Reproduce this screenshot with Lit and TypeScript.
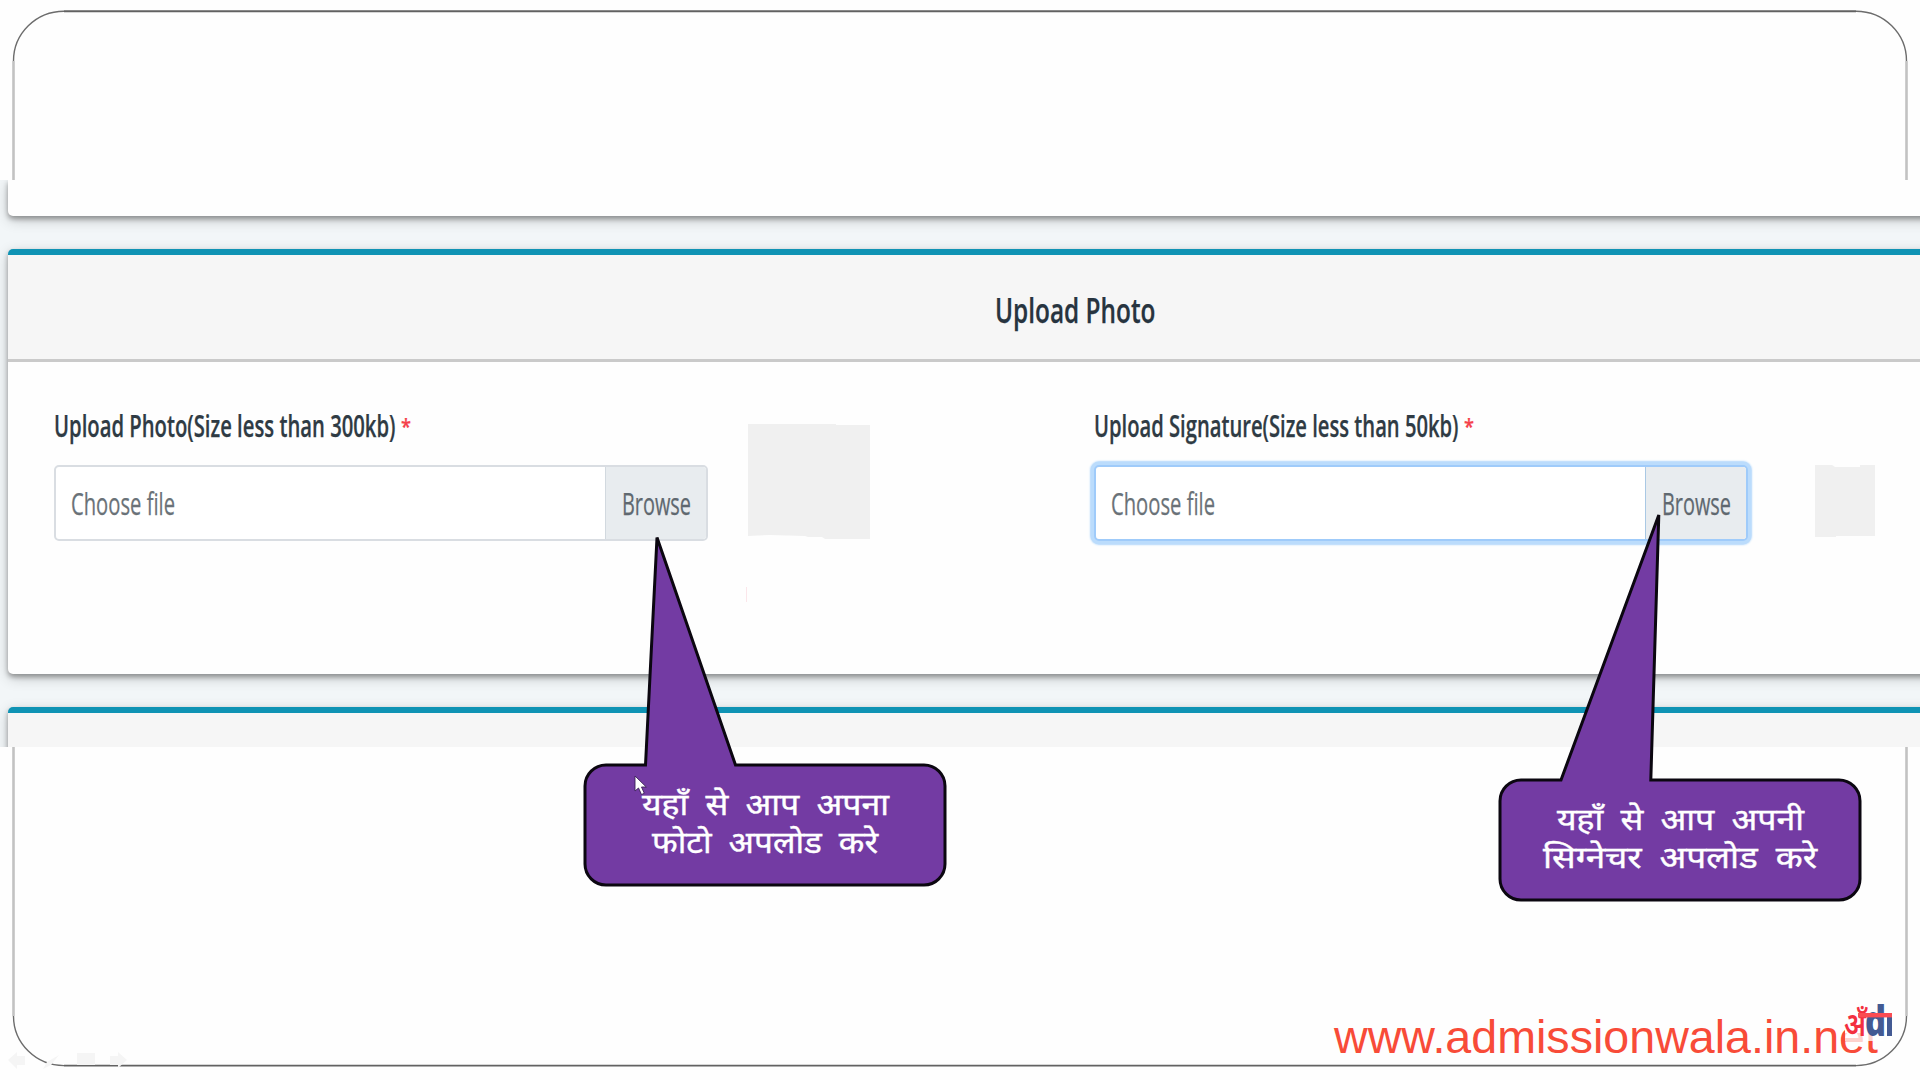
import { LitElement, html, css, svg } from "lit";
import { customElement, property } from "lit/decorators.js";

/** A line of text condensed or stretched to an exact width. */
@customElement("fit-text")
class FitText extends LitElement {
  @property() text = "";
  @property({ type: Number }) width = 100;
  @property({ type: Number }) size = 30;
  @property({ type: Number }) line = 40;
  @property({ type: Number }) base = 30;

  static styles = css`
    :host { display: block; flex: none; }
    svg { display: block; overflow: visible; }
    text { fill: currentColor; stroke: currentColor; stroke-width: var(--thicken, 0); white-space: pre; }
  `;

  render() {
    return html`<svg width=${this.width} height=${this.line}>
      <text x="0" y=${this.base} font-size=${this.size} textLength=${this.width}
        lengthAdjust="spacingAndGlyphs">${this.text}</text>
    </svg>`;
  }
}

@customElement("file-field")
class FileField extends LitElement {
  @property() label = "";
  @property({ type: Number }) labelWidth = 340;
  @property({ type: Boolean, reflect: true }) focused = false;

  static styles = css`
    :host { display: block; width: 654px; flex: none; --thicken: .25px; }
    .label { display: flex; gap: 5.5px; height: 59px; color: #2f3b44; font-weight: 600; }
    .star { color: #f5414b; font-weight: 600; }
    .input {
      display: flex; box-sizing: border-box; height: 76px;
      border: 2px solid #d9dde2; border-radius: 5px; background: #fff; color: #6a7278;
    }
    .name { flex: 1; padding: 16px 0 0 15px; }
    .browse {
      box-sizing: border-box; width: 101px; padding: 16px 0 0 16px;
      border-left: 1.5px solid #d2d9df; background: #e8ecef; color: #5f686f;
      border-radius: 0 3px 3px 0;
    }
    :host([focused]) .input { border-color: #9fcbfa; box-shadow: 0 0 0 3.5px #bbdcfc, 0 0 2px 4px #bbdcfc; }
    :host([focused]) .browse { border-left-color: #a9c8e4; }
  `;

  render() {
    return html`
      <div class="label">
        <fit-text .text=${this.label} .width=${this.labelWidth} .size=${30} .base=${30.5}></fit-text>
        <fit-text class="star" text="*" .width=${10} .size=${22} .base=${28}></fit-text>
      </div>
      <div class="input">
        <div class="name"><fit-text text="Choose file" .width=${104} .size=${30.5} .base=${31.5}></fit-text></div>
        <div class="browse"><fit-text text="Browse" .width=${69} .size=${30.5} .base=${31.5}></fit-text></div>
      </div>`;
  }
}

@customElement("call-out")
class CallOut extends LitElement {
  @property({ attribute: false }) lines: { text: string; width: number }[] = [];
  @property() outline = "";

  static styles = css`
    :host { display: block; position: absolute; width: 360px; height: 120px; }
    .shape { position: absolute; inset: 0; overflow: visible; }
    .lines {
      position: relative; display: flex; flex-direction: column; align-items: center;
      padding-top: 20px; color: #fff; word-spacing: 7.5px; --thicken: .4px;
    }
  `;

  render() {
    return html`
      <svg class="shape" width="360" height="120">
        <path d=${this.outline} fill="#733ba3" stroke="#0b0710" stroke-width="3" stroke-linejoin="miter" stroke-miterlimit="2"/>
      </svg>
      <div class="lines">
        ${this.lines.map(l => html`<fit-text .text=${l.text} .width=${l.width} .size=${30} .line=${38} .base=${29.5}></fit-text>`)}
      </div>`;
  }
}

const body = "H339 A21 21 0 0 1 360 21 V99 A21 21 0 0 1 339 120 H21 A21 21 0 0 1 0 99 V21 A21 21 0 0 1 21 0";

const frame = svg`
  <g fill="none">
    <path d="M13.5 61V1016M1906.5 61V1016" stroke="#c2c2c2" stroke-width="2.6"/>
    <path d="M64 11.3H1856M64 1065.6H1856" stroke="#626262" stroke-width="1.9"/>
    <path d="M13.5 61A50.5 49.7 0 0 1 64 11.3M1856 11.3A50.5 49.7 0 0 1 1906.5 61M1906.5 1016A50.5 49.6 0 0 1 1856 1065.6M64 1065.6A50.5 49.6 0 0 1 13.5 1016" stroke="#6c6c6c" stroke-width="1.4"/>
  </g>
  <g fill="#f5f5f5">
    <path d="M8 1060l9-8v4h8v9h-8v4z"/>
    <path d="M43 1069l4-7 12-7-8 10z"/>
    <path d="M77 1053h18v12h-18z"/>
    <path d="M127 1060l-9-8v4h-8v9h8v3z"/>
  </g>`;

@customElement("app-root")
class AppRoot extends LitElement {
  static styles = css`
    :host {
      display: block; width: 1920px; height: 1080px; overflow: hidden; background: #fefefe;
      font-family: "Open Sans", "Noto Sans", sans-serif;
    }
    .slide { position: relative; display: grid; grid-template-rows: 180px 567px 1fr; height: 1080px; overflow: hidden; }
    .frame { position: absolute; inset: 0; }
    .band {
      grid-row: 2; position: relative; display: flex; flex-direction: column; gap: 33px;
      padding-left: 7.5px; overflow: hidden; background: #f2f6f8;
    }
    .card {
      flex: none; width: 1950px; box-sizing: border-box; border-radius: 5px; background: #fefefe;
      box-shadow: 0 3px 5px rgba(0, 0, 0, .32), 0 4px 14px rgba(0, 0, 0, .2);
    }
    .previous { height: 36px; border-radius: 0 0 5px 5px; }
    .upload { height: 425px; border-top: 6.5px solid #0f93b4; }
    .next { height: 100px; border-top: 6.5px solid #0f93b4; background: #f6f6f6; }
    .head {
      box-sizing: border-box; height: 107px; padding: 31.5px 0 0 987px;
      border-bottom: 3.5px solid #cacaca; background: #f6f6f6; color: #27343f; font-weight: 600; --thicken: .25px;
    }
    .fields { display: flex; padding: 44px 0 0 46.5px; }
    .thumb { flex: none; overflow: visible; }
    .photo { margin: 18px 224px 0 40px; }
    .signature { margin: 59px 0 0 67px; }
    .foot { grid-row: 3; position: relative; display: flex; justify-content: flex-end; align-items: flex-end; padding: 0 42px 16px 0; }
    .url { font-family: "Liberation Sans", Arial, sans-serif; color: #f84b38; }
    .brand { position: absolute; left: 1840px; top: 1000px; overflow: visible; }
    .first { left: 585.3px; top: 765.3px; }
    .second { left: 1500.3px; top: 780.3px; }
    .cursor { position: absolute; left: 633.5px; top: 774.5px; }
  `;

  render() {
    return html`
      <div class="slide">
        <svg class="frame" width="1920" height="1080">${frame}</svg>
        <div class="band">
          <section class="card previous"></section>
          <section class="card upload">
            <div class="head">
              <fit-text text="Upload Photo" .width=${160.5} .size=${35} .base=${35.5}></fit-text>
            </div>
            <div class="fields">
              <file-field label="Upload Photo(Size less than 300kb)" .labelWidth=${341.5}></file-field>
              <svg class="thumb photo" width="122" height="115">
                <path d="M0 0H88V1H122V115H77L74 113H60L57 112L22 111L0 112Z" fill="#f0f0f0"/>
                <path d="M-1.5 163v15" stroke="#fbe6ea" stroke-width="1"/>
              </svg>
              <file-field focused label="Upload Signature(Size less than 50kb)" .labelWidth=${364.5}></file-field>
              <svg class="thumb signature" width="60" height="72">
                <path d="M0 0H17L20 2H45V0H60V71H21V72H0Z" fill="#f0f0f0"/>
              </svg>
            </div>
          </section>
          <section class="card next"></section>
        </div>
        <div class="foot">
          <fit-text class="url" text="www.admissionwala.in.net" .width=${544} .size=${46.5} .line=${48} .base=${37}></fit-text>
        </div>
        <svg class="brand" width="60" height="50">
          <rect x="5" y="33" width="38" height="8" fill="#fff" opacity=".75"/>
          <rect x="5" y="22" width="38" height="11" fill="#fff"/>
          <text x="25" y="36" font-size="42" font-weight="800" fill="#435a93" textLength="21" lengthAdjust="spacingAndGlyphs">d</text>
          <rect x="47" y="16" width="5" height="20" fill="#435a93"/>
          <text x="4" y="36" font-size="34" font-weight="600" fill="#f3303f" textLength="22" lengthAdjust="spacingAndGlyphs">अँ</text>
          <rect x="18" y="13" width="34" height="4.4" fill="#fa4c52"/>
        </svg>
        <call-out class="first"
          outline=${`M21 0H60.5L72 -227.5L150.5 0${body}Z`}
          .lines=${[{ text: "यहाँ से आप अपना", width: 247 }, { text: "फोटो अपलोड करे", width: 226 }]}></call-out>
        <call-out class="second"
          outline=${`M21 0H61L158.8 -265L150.8 0${body}Z`}
          .lines=${[{ text: "यहाँ से आप अपनी", width: 247 }, { text: "सिग्नेचर अपलोड करे", width: 274 }]}></call-out>
        <svg class="cursor" width="15" height="21">
          <path d="M1 1V16L4.5 13L7.5 19.5L10.3 18.3L7.5 12H12.3Z" fill="#fff" stroke="#3b2257" stroke-width=".9"/>
        </svg>
      </div>`;
  }
}
